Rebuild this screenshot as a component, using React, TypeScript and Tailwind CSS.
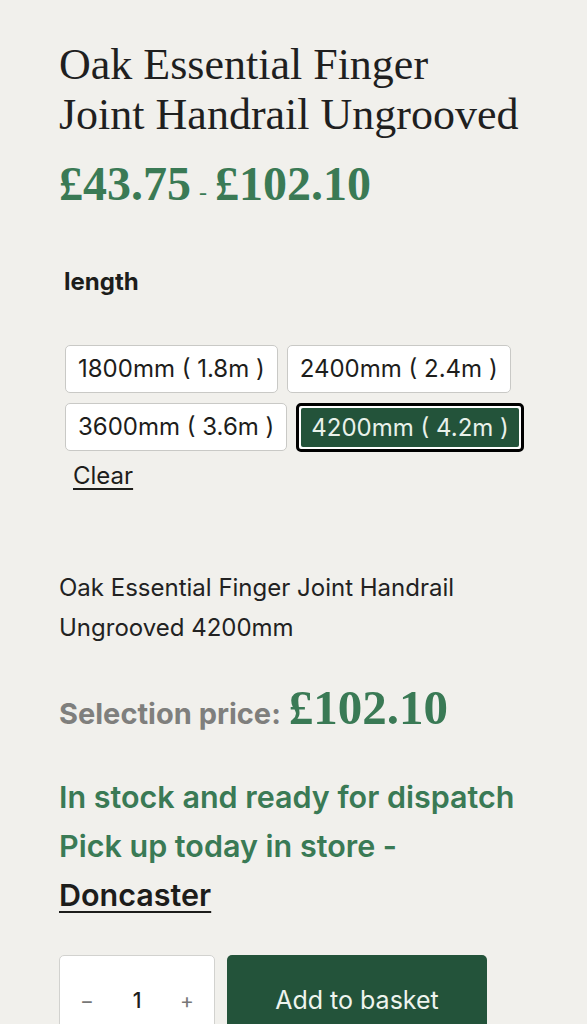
import React from "react";

const sizes = [
  { label: "1800mm ( 1.8m )", selected: false },
  { label: "2400mm ( 2.4m )", selected: false },
  { label: "3600mm ( 3.6m )", selected: false },
  { label: "4200mm ( 4.2m )", selected: true },
];

const serif = "font-['Liberation_Serif',serif]";

const App = () => {
  return (
    <div className="min-h-[1024px] bg-[#f1f0ec] font-['Inter',sans-serif] text-[#1d1d1b] pl-[59px] pr-[20px] pt-[40px] overflow-hidden">
      {/* ---------------- TITLE ---------------- */}
      <h1 className={`${serif} text-[44px] leading-[50px] text-[#1f1f1f] whitespace-nowrap`}>
        Oak Essential Finger
        <br />
        Joint Handrail Ungrooved
      </h1>

      <div className={`${serif} mt-[17px] flex items-baseline text-[48px] font-bold text-[#3a7a55] leading-[54px]`}>
        <span>£43.75</span>
        <span className="mx-[8px] text-[24px] font-normal">-</span>
        <span>£102.10</span>
      </div>

      {/* ---------------- VARIANTS ---------------- */}
      <div className="mt-[45px] pl-[5px] text-[24px] font-bold">length</div>

      <div className="mt-[45px] pl-[6px] flex flex-wrap gap-x-[9px] gap-y-[10px] w-[480px]">
        {sizes.map((s) =>
          s.selected ? (
            <div
              key={s.label}
              className="rounded-[5px] border-[3px] border-black bg-white p-[2px]"
            >
              <div className="h-[39px] px-[10px] flex items-center bg-[#23533a] text-[#e9f1ea] text-[24px] rounded-[2px]">
                {s.label}
              </div>
            </div>
          ) : (
            <div
              key={s.label}
              className="h-[48px] px-[12px] flex items-center rounded-[5px] border border-[#c9c9c6] bg-white text-[24px]"
            >
              {s.label}
            </div>
          )
        )}
      </div>

      <div className="mt-[6px] pl-[14px] text-[24px] underline underline-offset-[4px] decoration-[1.5px]">
        Clear
      </div>

      {/* ---------------- SELECTION ---------------- */}
      <p className="mt-[74px] text-[24px] leading-[40px] text-[#222] w-[440px]">
        Oak Essential Finger Joint Handrail Ungrooved 4200mm
      </p>

      <div className="mt-[23px] flex items-baseline gap-[8px]">
        <span className="text-[29px] font-bold text-[#7f7f7d]">Selection price:</span>
        <span className={`${serif} text-[49px] font-bold text-[#3a7a55]`}>£102.10</span>
      </div>

      <div className="mt-[27px] text-[30.5px] font-semibold leading-[49px] text-[#3a7a55]">
        <div>In stock and ready for dispatch</div>
        <div>Pick up today in store -</div>
        <div className="text-[#1d1d1b] underline underline-offset-[5px] decoration-[2px]">
          Doncaster
        </div>
      </div>

      {/* ---------------- BASKET ---------------- */}
      <div className="mt-[36px] flex gap-[12px]">
        <div className="w-[156px] h-[90px] rounded-t-[5px] border border-[#d2d2cf] bg-white flex items-center justify-between px-[20px] pt-[2px] text-[21px]">
          <span className="text-[#777]">−</span>
          <span className="font-medium">1</span>
          <span className="text-[#777]">+</span>
        </div>
        <button className="w-[260px] h-[90px] rounded-t-[5px] bg-[#23533a] text-[#eef4ee] text-[25px] flex items-center justify-center pt-[2px]">
          Add to basket
        </button>
      </div>
    </div>
  );
};

export default App;
